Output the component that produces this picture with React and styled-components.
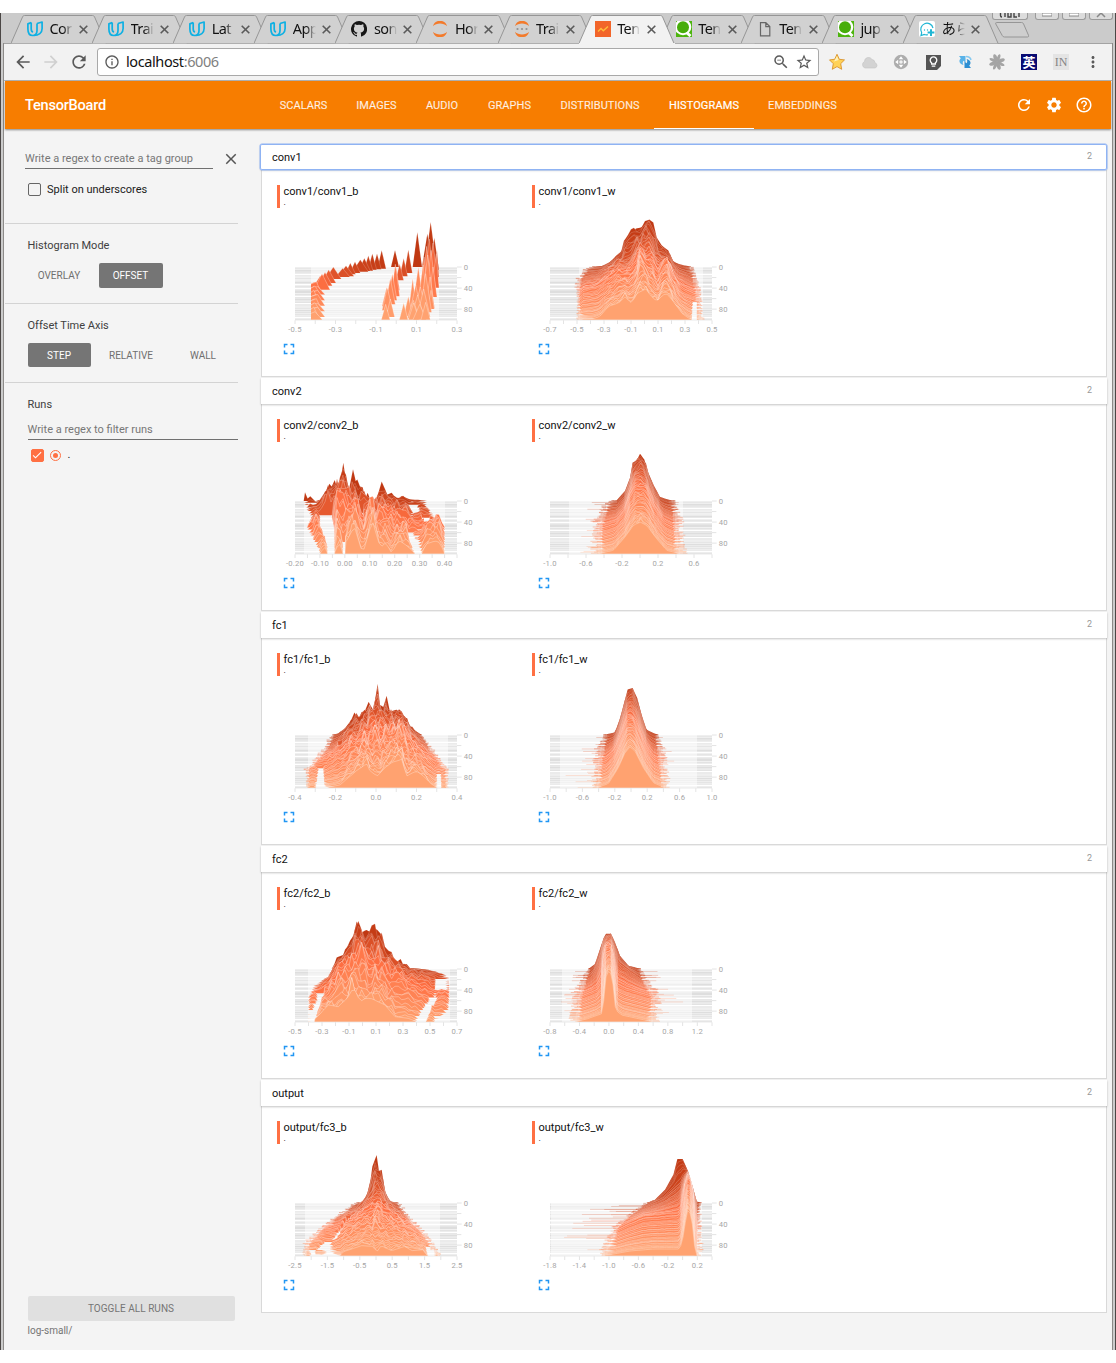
import React from "react";
import styled, { createGlobalStyle } from "styled-components";
import {
  MdArrowBack, MdArrowForward, MdRefresh, MdInfoOutline, MdZoomOut, MdStarBorder,
  MdMoreVert, MdSettings, MdHelpOutline, MdClose, MdFullscreen, MdCheck,
} from "react-icons/md";

const Global = createGlobalStyle`
  * { box-sizing: border-box; }
  body { margin: 0; background: #fff; font-family: Roboto, sans-serif; }
  svg { display: block; flex: none; }
`;

/* ---------- browser window ---------- */
const Screen = styled.div`
  width: 1116px;
  height: 1363px;
  padding-top: 13px;
  overflow: hidden;
`;
const BrowserWindow = styled.div`
  height: 1337px;
  border: solid #4b4745;
  border-width: 0 1px;
  background: #cbcbcb;
  display: flex;
  flex-direction: column;
  position: relative;
  overflow: hidden;
`;
const TabStrip = styled.div`
  height: 30px;
  flex: none;
  display: flex;
  padding: 2px 0 0 10px;
`;
const TabItem = styled.div`
  position: relative;
  z-index: ${(p) => (p.$active ? 2 : 1)};
  width: 81.1px;
  height: 28px;
  flex: none;
  display: flex;
  align-items: center;
  padding-left: 16px;
`;
const TabShape = styled.svg`
  position: absolute;
  left: 0;
  top: 0;
`;
const TabIcon = styled.span`
  position: relative;
  width: 16px;
  height: 16px;
`;
const TabTitle = styled.span`
  position: relative;
  width: 29px;
  margin: 0 .5px 2px 6.5px;
  white-space: nowrap;
  font: 14.5px/20px "Noto Sans", "Noto Sans CJK JP", sans-serif;
  letter-spacing: -0.6px;
  color: #111;
  -webkit-mask-image: linear-gradient(90deg, #000 13px, transparent 23px);
  mask-image: linear-gradient(90deg, #000 13px, transparent 23px);
`;
const TabClose = styled.svg`
  position: relative;
`;
const NewTab = styled.svg`
  margin: 6px 0 0 9px;
`;
const WindowButtons = styled.div`
  position: absolute;
  right: 2px;
  top: 0;
  height: 8px;
  display: flex;
  gap: 3px;
  overflow: hidden;
`;
const WindowButton = styled.div`
  width: ${(p) => p.$w}px;
  height: 7px;
  margin-right: ${(p) => p.$mr || 0}px;
  border: 1px solid #9b9b9b;
  border-top: 0;
  border-radius: 0 0 3px 3px;
  background: #dcdcdc;
  display: flex;
  justify-content: center;
`;
const Inner = styled.div`
  flex: 1;
  margin: 0 2px;
  border: solid #8c8a88;
  border-width: 0 1px;
  background: #f4f4f4;
  display: flex;
  flex-direction: column;
  min-height: 0;
`;
const Toolbar = styled.div`
  height: 38px;
  flex: none;
  display: flex;
  align-items: center;
  background: #f2f2f2;
  border-bottom: 1px solid #b4b4b4;
  border-top: 1px solid #a3a3a3;
  color: #5a5a5a;
`;
const NavButtons = styled.div`
  display: flex;
  width: 92px;
  padding-left: 9px;
  gap: 8px;
`;
const Omnibox = styled.div`
  width: 722px;
  height: 28px;
  margin-left: 1px;
  border: 1px solid #a9a9a9;
  border-radius: 3px;
  background: #fff;
  display: flex;
  align-items: center;
  padding: 0 5px 0 6px;
`;
const BookmarkStar = styled(MdStarBorder)`
  margin-left: 5px;
`;
const Address = styled.div`
  flex: 1;
  margin-left: 6px;
  padding-bottom: 2px;
  font: 14.5px/20px "Noto Sans", sans-serif;
  letter-spacing: -0.4px;
  color: #111;
  span { color: #808080; }
`;
const Extensions = styled.div`
  display: flex;
  padding-left: 2px;
  & > * {
    width: 32px;
    height: 18px;
    display: flex;
    align-items: center;
    justify-content: center;
  }
`;
const KanjiBadge = styled.span`
  width: 16px;
  height: 16px;
  background: #090b73;
  color: #fff;
  text-align: center;
  font: bold 13px/15px "Noto Sans CJK JP", sans-serif;
`;
const NotionBadge = styled.span`
  width: 16px;
  height: 16px;
  background: #e4e4e4;
  color: #858585;
  text-align: center;
  font: 12px/16px "Liberation Serif", serif;
`;

/* ---------- app ---------- */
const AppHeader = styled.header`
  height: 48px;
  flex: none;
  margin: 0 1px;
  background: #f77d00;
  box-shadow: 0 1px 2px rgba(0, 0, 0, 0.45);
  display: flex;
  align-items: center;
  position: relative;
  color: #fff;
`;
const Brand = styled.h1`
  margin: 0;
  width: 260px;
  padding-left: 20px;
  font: 500 14.6px/20px Roboto, sans-serif;
  letter-spacing: -0.25px;
`;
const NavTab = styled.a`
  width: ${(p) => p.$w}px;
  height: 48px;
  line-height: 49px;
  text-align: center;
  font-size: 11px;
  font-weight: 400;
  letter-spacing: ${(p) => (p.$active ? 0.12 : 0.05)}px;
  color: ${(p) => (p.$active ? "#fff" : "rgba(255,255,255,.82)")};
  -webkit-text-stroke: 0.2px currentColor;
  box-shadow: ${(p) => (p.$active ? "inset 0 -1px #fff" : "none")};
`;
const HeaderActions = styled.div`
  margin-left: auto;
  display: flex;
  gap: 12px;
  padding-right: 18px;
`;
const Body = styled.div`
  flex: 1;
  display: flex;
  min-height: 0;
`;
const Sidebar = styled.aside`
  width: 234px;
  flex: none;
  padding-left: 1px;
  display: flex;
  flex-direction: column;
  font-size: 11px;
  color: #404040;
`;
const Section = styled.section`
  height: ${(p) => p.$h}px;
  border-bottom: 1px solid #d3d3d3;
  padding: ${(p) => p.$pad || "14px 0 0 22.5px"};
`;
const SectionTitle = styled.h3`
  margin: 0;
  font: 400 11px/15px Roboto, sans-serif;
`;
const TagRow = styled.div`
  display: flex;
  gap: 9px;
  align-items: center;
  height: 20px;
  color: #555;
`;
const RegexField = styled.div`
  width: ${(p) => p.$w}px;
  flex: none;
  height: 20px;
  margin-top: ${(p) => p.$mt || 0}px;
  line-height: 19px;
  color: #777;
  border-bottom: 1px solid #707070;
`;
const CheckRow = styled.label`
  display: flex;
  align-items: center;
  height: 16px;
  line-height: 16px;
  margin: ${(p) => p.$mt}px 0 0 3px;
  color: #212121;
`;
const CheckLabel = styled.span`
  padding-top: 1px;
`;
const CheckBox = styled.span`
  width: 13px;
  height: 13px;
  margin-right: ${(p) => (p.$on ? 0 : 6)}px;
  border-radius: 2px;
  border: 1.5px solid ${(p) => (p.$on ? "#ff7043" : "#666")};
  background: ${(p) => (p.$on ? "#ff7043" : "transparent")};
  color: #fff;
  display: flex;
  align-items: center;
  justify-content: center;
`;
const RadioDot = styled.span`
  width: 11px;
  height: 11px;
  margin: 0 7px 0 6px;
  border: 1px solid #ff7043;
  border-radius: 50%;
  display: flex;
  align-items: center;
  justify-content: center;
  &::after {
    content: "";
    width: 5px;
    height: 5px;
    flex: none;
    border-radius: 50%;
    background: #ff7043;
  }
`;
const ButtonRow = styled.div`
  display: flex;
  gap: 8px;
  margin-top: 10px;
`;
const ModeButton = styled.button`
  width: ${(p) => p.$w}px;
  height: ${(p) => p.$h || 25}px;
  padding: 0;
  border: 0;
  border-radius: 2px;
  font: 400 10px/25px Roboto, sans-serif;
  background: ${(p) => (p.$active ? "#757575" : "transparent")};
  color: ${(p) => (p.$active ? "#fff" : "#6f6f6f")};
`;
const Runs = styled.section`
  flex: 1;
  padding: 14px 0 0 22.5px;
  display: flex;
  flex-direction: column;
`;
const RunsFooter = styled.div`
  margin-top: auto;
  padding-bottom: 12px;
  color: #757575;
  font-size: 10px;
  line-height: 15px;
`;
const ToggleButton = styled.button`
  display: block;
  width: 207px;
  height: 25px;
  margin-bottom: 2px;
  padding: 0 0 1px;
  border: 0;
  border-radius: 2px;
  background: #e0e0e0;
  color: #757575;
  font: 400 10px/23px Roboto, sans-serif;
  letter-spacing: 0.05px;
`;
const Main = styled.main`
  padding: 15px 0 0 22px;
  width: 870px;
`;
const Category = styled.section`
  width: 847px;
  height: 234px;
`;
const CategoryHeader = styled.div`
  height: 26px;
  margin-left: ${(p) => (p.$focus ? 0 : 1)}px;
  padding: 0 15px 0 ${(p) => (p.$focus ? 12 : 11)}px;
  position: relative;
  display: flex;
  align-items: center;
  justify-content: space-between;
  background: #fff;
  font-size: 11px;
  line-height: 15px;
  color: #111;
  border-radius: ${(p) => (p.$focus ? 2 : 0)}px;
  box-shadow: ${(p) => (p.$focus ? "inset 0 0 0 1px #8fb3f3, 0 0 0 .5px #8fb3f3, 0 1px 2px rgba(0,0,0,.15)" : "0 1px 2px rgba(0,0,0,.24)")};
  small { font-size: 9px; color: #999; padding-bottom: 1px; }
`;
const CategoryBody = styled.div`
  margin: 0 0 0 1px;
  height: 207px;
  border: 1px solid #d9d9d9;
  border-top: 0;
  background: #fff;
  padding: 15px 0 0 15px;
  display: flex;
`;
const Card = styled.article`
  width: 255px;
`;
const CardTitle = styled.div`
  height: 23px;
  border-left: 3px solid #ff7043;
  padding-left: 3.5px;
  font-size: 11px;
  line-height: 13px;
  color: #111;
  div { font-size: 9px; line-height: 9px; }
`;
const ChartSvg = styled.svg`
  margin: -1px 0 -4px 3px;
  text { font-family: Roboto, "Noto Sans", sans-serif; font-size: 23px; fill: #a6a6a6; letter-spacing: .5px; }
`;
const Expand = styled.div`
  color: #2196f3;
  padding-left: 3px;
`;

/* ---------- histogram data: [x, height] outlines at moments in time ---------- */
const N = 52;
const rng = (seed) => () => {
  seed = (seed * 1664525 + 1013904223) % 4294967296;
  return seed / 4294967296;
};
const at = (pts, x) => {
  if (x <= pts[0][0]) return 0;
  for (let i = 1; i < pts.length; i++)
    if (x <= pts[i][0]) {
      const [a, b] = [pts[i - 1], pts[i]];
      return a[1] + ((b[1] - a[1]) * (x - a[0])) / (b[0] - a[0] || 1);
    }
  return 0;
};
const mix = (a, b, f) => a.map((v, i) => Math.round(v + (b[i] - v) * f));
const shade = (t) => {
  const c = t < 0.45 ? mix([192, 56, 18], [255, 112, 67], t / 0.45) : mix([255, 112, 67], [255, 162, 112], (t - 0.45) / 0.55);
  return `rgb(${c})`;
};
const TIMES = (() => {
  const r = rng(11);
  const out = [0];
  for (let i = 1; i < N - 1; i++) out.push((i + (r() - 0.5) * 1.1) / (N - 1));
  return [...out, 1];
})();
const STRIPES = (() => {
  const r = rng(5);
  return Array.from({ length: 53 }, (_, y) => {
    if ([7, 17, 21, 29, 36, 50].includes(y)) return 0;
    const dense = [3, 15, 24, 25, 32, 43].includes(y);
    return dense ? 0.13 : 0.05 + r() * 0.06;
  });
})();

/* holes are empty bins: [from time, to time, left/right at start, left/right at end] */
function profileLayers({ keys, noise, step = 8, seed, every = 1, holes = [] }) {
  const r = rng(seed);
  const bins = Math.ceil(486 / step);
  let wob = Array.from({ length: bins + 1 }, () => r() - 0.5);
  const times = TIMES.filter((_, i) => i % every === 0 || i === N - 1);
  const keep = every > 1 ? 0.5 : 0.68;
  return times.map((t) => {
    let k = 0;
    while (k < keys.length - 2 && t > keys[k + 1][0]) k++;
    const [t0, a] = keys[k];
    const [t1, b] = keys[k + 1];
    const f = Math.min(1, (t - t0) / (t1 - t0));
    const left = a[0][0] * (1 - f) + b[0][0] * f;
    const right = a[a.length - 1][0] * (1 - f) + b[b.length - 1][0] * f;
    wob = wob.map((w) => w * keep + (r() - 0.5) * 0.65);
    const damp = t === 0 || t === 1 ? 0.05 : 1;
    const open = holes
      .filter((o) => t >= o[0] && t <= o[1])
      .map((o) => {
        const g = (t - o[0]) / (o[1] - o[0]);
        return [o[2] + (o[4] - o[2]) * g, o[3] + (o[5] - o[3]) * g];
      });
    const xs = new Set([Math.round(left), Math.round(right), ...open.flat()]);
    for (let i = 0; i <= bins; i++) xs.add(i * step);
    if (t === 0) a.forEach((p) => xs.add(p[0]));
    const pts = [...xs].sort((m, n) => m - n).map((x) => {
      if (x <= left || x >= right || open.some(([l, q]) => x >= l && x <= q)) return [x, 0];
      const h = at(a, x) * (1 - f) + at(b, x) * f;
      const taper = t === 0 ? 1 : Math.min(1, (x - left) / 14, (right - x) / 14);
      return [x, h < 1.2 ? 0 : Math.max(0, h * taper * (1 + wob[Math.round(x / step)] * noise * damp))];
    });
    return { t, pts };
  });
}

const spike = (x, base, peak, w) => ({ x, t: Math.max(0, base / 158), h: base - peak, w });
function spikeLayers() {
  const list = [
    [260, 5, -50, 13], [246, 7, -40, 13], [232, 8, -40, 13], [220, 11, -34, 14], [196, 14, -22, 24],
    [180, 18, -16, 16], [166, 22, -12, 16], [153, 28, -4, 24], [115, 36, 0, 24], [101, 48, 8, 22],
    [81, 68, 20, 24], [76, 60, 26, 22], [208, 12, -26, 18], [143, 30, 4, 22], [90, 56, 16, 22],
    [300, 0, -50, 12], [340, 18, -52, 12], [326, 28, -26, 12], [314, 40, -10, 12],
    [301, 88, -8, 13], [303, 70, 0, 11], [292, 100, 20, 14], [286, 112, 34, 15], [275, 118, 60, 14], [277, 130, 62, 16],
    [367, 0, -104, 14], [397, 0, -100, 16], [407, 2, -135, 18], [418, 8, -88, 15], [426, 30, -50, 10],
    [424, 62, -40, 14], [414, 60, -72, 17], [403, 52, -84, 16], [395, 80, -62, 17], [408, 88, -50, 16],
    [387, 90, -30, 14], [414, 90, 0, 12], [398, 110, -36, 18], [370, 118, 0, 17], [384, 120, -6, 16],
    [405, 124, 30, 14], [353, 128, 34, 12], [392, 136, 20, 18], [362, 136, 54, 18], [376, 140, 60, 20],
    [408, 126, 70, 10], [340, 148, 88, 14], [386, 150, 66, 20], [368, 152, 84, 20], [355, 154, 100, 18],
    [326, 158, 108, 13], [356, 158, 108, 16], [374, 158, 112, 20], [392, 158, 106, 14],
    [272, 158, 112, 13], [286, 150, 96, 13],
  ].map((s) => spike(...s));
  for (let i = 0; i < 22; i++) {
    const b = 70 + i * 4.2;
    list.push({ x: 56 + (i % 4) * 4, t: b / 158, h: 24 + (i % 3) * 5, w: 16 + (i % 2) * 6 });
  }
  return list
    .sort((a, b) => a.t - b.t)
    .map((s) => {
      const l = Math.max(48, s.x - s.w);
      return { t: s.t, pts: [[l, s.x < 72 ? s.h * 0.8 : 0], [s.x, s.h], [Math.min(432, s.x + s.w), 0]] };
    });
}

const CHARTS = {
  "conv1/conv1_b": {
    spikes: true, dom: [48, 433], ticks: ["-0.5", "-0.3", "-0.1", "0.1", "0.3"], gap: 121.5,
  },
  "conv1/conv1_w": {
    dom: [87, 458], ticks: ["-0.7", "-0.5", "-0.3", "-0.1", "0.1", "0.3", "0.5"], gap: 81, noise: 0.3, step: 9, seed: 3, edge: 8,
    holes: [[0.66, 1, 430, 440, 426, 440]],
    keys: [
      [0, [[110, 0], [155, 3], [180, 15], [200, 33], [212, 40], [222, 80], [235, 92], [258, 115], [275, 120], [285, 138], [298, 142], [310, 134], [320, 90], [335, 65], [355, 50], [370, 15], [400, 5], [430, 0]]],
      [0.25, [[87, 0], [95, 6], [140, 14], [180, 40], [212, 62], [235, 60], [262, 100], [278, 100], [300, 115], [320, 70], [350, 62], [375, 30], [410, 10], [440, 0]]],
      [0.55, [[86, 0], [88, 16], [130, 22], [170, 44], [205, 70], [230, 60], [258, 90], [272, 145], [285, 110], [305, 95], [325, 60], [346, 118], [360, 80], [390, 25], [430, 6], [452, 0]]],
      [1, [[86, 0], [92, 2], [130, 3], [150, 10], [175, 40], [205, 50], [225, 68], [245, 50], [262, 80], [288, 92], [300, 75], [320, 55], [340, 75], [350, 78], [370, 55], [395, 20], [415, 5], [428, 2], [442, 3], [456, 0]]],
    ],
  },
  "conv2/conv2_b": {
    dom: [28, 449], ticks: ["-0.20", "-0.10", "0.00", "0.10", "0.20", "0.30", "0.40"], gap: 74.8, noise: 1.3, step: 9, seed: 21, every: 2,
    holes: [
      [0.04, 0.1, 44, 80, 44, 72], [0.3, 0.55, 76, 110, 76, 118], [0.55, 0.85, 78, 118, 98, 118], [0.85, 1, 98, 118, 98, 118],
      [0.24, 0.42, 194, 204, 196, 204], [0.12, 0.24, 344, 366, 356, 378], [0.26, 0.36, 300, 318, 308, 324], [0.32, 0.5, 378, 402, 392, 410],
      [0.42, 0.5, 318, 332, 322, 338], [0.62, 1, 330, 352, 362, 380], [0.8, 1, 144, 150, 144, 150], [0.42, 0.52, 208, 218, 210, 218],
    ],
    keys: [
      [0, [[26, 0], [30, 26], [38, 8], [46, 14], [60, 0], [75, 4], [95, 35], [103, 52], [110, 44], [119, 62], [127, 40], [136, 60], [145, 112], [153, 60], [163, 40], [174, 98], [182, 60], [187, 64], [195, 44], [203, 42], [211, 8], [218, 25], [226, 4], [245, 5], [260, 60], [270, 36], [277, 20], [290, 25], [305, 5], [320, 15], [345, 5], [375, 3], [400, 0]]],
      [0.1, [[28, 0], [42, 14], [60, 6], [85, 25], [100, 46], [120, 60], [135, 70], [145, 80], [160, 55], [175, 75], [190, 50], [205, 36], [220, 12], [240, 16], [260, 44], [280, 30], [300, 22], [325, 14], [350, 5], [380, 10], [398, 0]]],
      [0.3, [[48, 0], [60, 20], [72, 12], [90, 45], [105, 60], [118, 60], [132, 84], [145, 70], [155, 65], [170, 60], [190, 50], [205, 40], [225, 45], [240, 45], [260, 40], [275, 40], [300, 34], [330, 24], [350, 6], [395, 16], [420, 0]]],
      [0.5, [[34, 0], [44, 22], [60, 35], [70, 22], [78, 0], [112, 0], [118, 55], [130, 84], [145, 60], [160, 70], [175, 50], [190, 50], [198, 25], [212, 25], [225, 74], [240, 50], [260, 40], [285, 45], [300, 35], [330, 30], [350, 18], [375, 10], [415, 30], [440, 26], [450, 0]]],
      [0.78, [[58, 0], [62, 24], [74, 32], [94, 6], [98, 0], [116, 0], [120, 50], [132, 70], [145, 30], [160, 50], [176, 80], [190, 60], [205, 20], [230, 100], [248, 50], [270, 44], [290, 30], [312, 44], [335, 32], [345, 0], [372, 0], [395, 34], [420, 44], [447, 38], [450, 0]]],
      [1, [[75, 0], [77, 15], [85, 30], [98, 0], [118, 0], [132, 35], [145, 2], [150, 30], [178, 80], [203, 0], [215, 40], [232, 100], [250, 35], [263, 20], [272, 35], [290, 2], [310, 40], [335, 25], [360, 0], [378, 0], [395, 30], [420, 38], [447, 30], [449, 0]]],
    ],
  },
  "conv2/conv2_w": {
    dom: [58, 400], ticks: ["-1.0", "-0.6", "-0.2", "0.2", "0.6"], gap: 108, noise: 0.1, step: 8, seed: 5, edge: 24, tails: [60, 400], core: [150, 385],
    keys: [
      [0, [[170, 0], [200, 2], [225, 30], [240, 70], [248, 115], [260, 122], [270, 142], [283, 125], [295, 85], [310, 50], [330, 12], [360, 3], [380, 0]]],
      [0.5, [[145, 0], [165, 6], [200, 18], [225, 50], [245, 108], [258, 128], [270, 122], [285, 122], [310, 68], [340, 20], [380, 0]]],
      [1, [[145, 0], [190, 10], [225, 50], [250, 85], [270, 95], [290, 85], [320, 45], [350, 10], [390, 0]]],
    ],
  },
  "fc1/fc1_b": {
    dom: [38, 458], ticks: ["-0.4", "-0.2", "0.0", "0.2", "0.4"], gap: 121.5, noise: 0.5, step: 8, seed: 31, edge: 6,
    holes: [[0.64, 1, 72, 84, 64, 88], [0.26, 0.36, 128, 138, 130, 138], [0.74, 1, 426, 436, 428, 438]],
    keys: [
      [0, [[110, 0], [130, 5], [150, 20], [165, 35], [178, 68], [190, 50], [205, 60], [221, 100], [235, 75], [247, 138], [255, 90], [265, 85], [275, 118], [285, 70], [305, 76], [320, 64], [332, 52], [350, 20], [380, 0]]],
      [0.25, [[92, 0], [110, 8], [140, 25], [160, 50], [180, 58], [205, 75], [225, 85], [247, 105], [265, 88], [285, 90], [305, 85], [320, 85], [335, 60], [360, 40], [385, 15], [405, 0]]],
      [0.6, [[50, 0], [62, 10], [100, 20], [150, 40], [180, 66], [215, 85], [247, 95], [285, 95], [320, 110], [350, 60], [390, 30], [420, 10], [448, 0]]],
      [0.66, [[38, 0], [42, 14], [62, 8], [76, 2], [100, 15], [150, 36], [180, 62], [215, 82], [247, 85], [285, 90], [320, 105], [350, 55], [390, 32], [415, 8], [430, 3], [445, 10], [455, 0]]],
      [1, [[38, 0], [40, 14], [58, 5], [64, 0], [92, 0], [135, 8], [160, 30], [190, 55], [215, 72], [225, 50], [247, 35], [270, 60], [290, 75], [320, 85], [335, 35], [365, 50], [385, 35], [410, 10], [426, 0], [438, 0], [444, 12], [457, 0]]],
    ],
  },
  "fc1/fc1_w": {
    dom: [29, 440], ticks: ["-1.0", "-0.6", "-0.2", "0.2", "0.6", "1.0"], gap: 97.2, noise: 0.07, step: 8, seed: 8, edge: 20, tails: [40, 430], core: [145, 335],
    keys: [
      [0, [[160, 0], [195, 8], [210, 50], [222, 95], [233, 137], [248, 141], [262, 110], [275, 60], [290, 15], [325, 0]]],
      [0.5, [[145, 0], [170, 8], [195, 36], [215, 85], [232, 132], [245, 137], [260, 110], [285, 50], [310, 12], [335, 0]]],
      [1, [[140, 0], [175, 12], [205, 60], [225, 105], [240, 122], [255, 110], [280, 60], [310, 15], [345, 0]]],
    ],
  },
  "fc2/fc2_b": {
    dom: [39, 464], ticks: ["-0.5", "-0.3", "-0.1", "0.1", "0.3", "0.5", "0.7"], gap: 81, noise: 0.8, step: 10, seed: 77, every: 2,
    holes: [
      [0.5, 0.62, 68, 86, 68, 84], [0.62, 0.82, 66, 78, 52, 68], [0.82, 1, 48, 66, 50, 58],
      [0.2, 0.4, 422, 450, 420, 452], [0.54, 0.7, 408, 426, 396, 416], [0.7, 1, 392, 414, 364, 392],
    ],
    keys: [
      [0, [[110, 0], [118, 15], [125, 35], [145, 42], [165, 85], [175, 100], [185, 140], [200, 108], [215, 118], [230, 110], [245, 120], [258, 105], [265, 70], [285, 50], [305, 20], [317, 30], [325, 12], [335, 15], [345, 3], [400, 0]]],
      [0.14, [[98, 0], [115, 22], [145, 50], [165, 80], [185, 115], [210, 105], [250, 105], [270, 65], [300, 45], [340, 22], [390, 12], [440, 9], [462, 0]]],
      [0.32, [[54, 0], [75, 8], [100, 20], [120, 45], [145, 70], [165, 95], [185, 125], [210, 100], [250, 95], [270, 70], [300, 50], [340, 32], [400, 24], [424, 10], [428, 0], [452, 0], [457, 20], [464, 0]]],
      [0.56, [[38, 0], [55, 14], [80, 16], [110, 45], [135, 75], [160, 95], [185, 135], [200, 120], [215, 80], [235, 105], [260, 85], [280, 60], [310, 60], [340, 40], [380, 26], [408, 12], [418, 0], [424, 0], [430, 12], [462, 20], [464, 0]]],
      [0.8, [[38, 0], [48, 16], [60, 0], [68, 8], [100, 42], [135, 66], [160, 85], [180, 105], [200, 80], [215, 70], [240, 85], [270, 60], [310, 40], [350, 26], [378, 8], [388, 0], [404, 0], [410, 14], [450, 12], [462, 0]]],
      [1, [[39, 0], [42, 14], [52, 0], [70, 18], [85, 35], [100, 50], [130, 45], [160, 75], [172, 95], [180, 95], [195, 60], [215, 72], [240, 65], [270, 50], [300, 15], [340, 10], [366, 0], [388, 0], [405, 14], [420, 0]]],
    ],
  },
  "fc2/fc2_w": {
    dom: [35, 425], ticks: ["-0.8", "-0.4", "0.0", "0.4", "0.8", "1.2"], gap: 88.4, noise: 0.07, step: 7, seed: 9, edge: 22, tails: [30, 415], core: [90, 300],
    keys: [
      [0, [[115, 0], [135, 15], [150, 60], [162, 95], [168, 106], [183, 106], [195, 80], [210, 40], [235, 10], [275, 0]]],
      [0.2, [[102, 0], [125, 12], [145, 45], [162, 112], [168, 125], [184, 125], [192, 95], [205, 55], [245, 24], [275, 3], [285, 0]]],
      [0.55, [[85, 0], [140, 22], [155, 45], [163, 140], [170, 150], [182, 150], [190, 110], [200, 40], [230, 26], [290, 8], [315, 0]]],
      [1, [[75, 0], [110, 8], [155, 24], [160, 50], [167, 130], [172, 150], [181, 150], [188, 120], [197, 35], [215, 20], [270, 8], [310, 0]]],
    ],
  },
  "output/fc3_b": {
    dom: [30, 435], ticks: ["-2.5", "-1.5", "-0.5", "0.5", "1.5", "2.5"], gap: 97.2, noise: 0.45, step: 8, seed: 13, edge: 9,
    holes: [[0.36, 0.5, 156, 164, 148, 158], [0.5, 0.72, 140, 150, 112, 126], [0.74, 0.9, 94, 112, 66, 90], [0.9, 1, 46, 58, 50, 60], [0.84, 1, 392, 402, 400, 412]],
    keys: [
      [0, [[180, 0], [205, 3], [222, 35], [232, 110], [245, 144], [252, 95], [260, 100], [270, 35], [285, 5], [310, 0]]],
      [0.15, [[152, 0], [185, 12], [215, 40], [232, 80], [245, 95], [260, 80], [275, 34], [305, 14], [325, 0]]],
      [0.35, [[105, 0], [140, 12], [190, 30], [225, 60], [245, 75], [262, 55], [300, 30], [335, 12], [348, 0]]],
      [0.62, [[60, 0], [95, 14], [118, 6], [150, 28], [200, 50], [225, 54], [245, 75], [265, 60], [300, 44], [345, 24], [390, 0]]],
      [0.82, [[33, 0], [55, 10], [78, 12], [98, 0], [110, 2], [150, 25], [200, 46], [245, 56], [300, 42], [350, 28], [385, 10], [415, 0]]],
      [1, [[30, 0], [36, 7], [50, 0], [135, 0], [145, 12], [200, 30], [235, 28], [245, 10], [258, 30], [290, 15], [330, 28], [350, 15], [385, 18], [395, 0], [415, 0], [422, 5], [432, 0]]],
    ],
  },
  "output/fc3_w": {
    dom: [3, 456], ticks: ["-1.8", "-1.4", "-1.0", "-0.6", "-0.2", "0.2"], gap: 88.4, noise: 0.05, step: 7, seed: 15, edge: 14, tails: [10, 452], core: [210, 436],
    keys: [
      [0, [[290, 0], [315, 10], [345, 40], [370, 85], [382, 132], [398, 132], [412, 100], [425, 60], [440, 5], [455, 0]]],
      [0.12, [[262, 0], [300, 16], [340, 36], [375, 66], [392, 82], [405, 110], [414, 115], [430, 60], [442, 5], [448, 0]]],
      [0.5, [[195, 0], [230, 18], [280, 40], [390, 50], [400, 100], [410, 158], [418, 158], [432, 90], [442, 0]]],
      [1, [[150, 0], [180, 3], [240, 14], [310, 20], [385, 20], [396, 35], [404, 90], [413, 135], [420, 128], [432, 70], [441, 0]]],
    ],
  },
};

function Histogram({ name }) {
  const c = CHARTS[name];
  const r = rng(name.length * 97 + (c.seed || 1));
  const layers = c.spikes ? spikeLayers() : profileLayers(c);
  const minor = Math.round(486 / (c.gap / 2));
  return (
    <ChartSvg width="210" height="137" viewBox="-45 -180 630 411">
      {STRIPES.map((o, i) => (
        <g key={i}>
          <rect x="0" y={i * 3} width="486" height="3" fillOpacity={o} shapeRendering="crispEdges" />
          <rect x={c.dom[0]} y={i * 3} width={c.dom[1] - c.dom[0]} height="3" fill="#fff" fillOpacity=".5" shapeRendering="crispEdges" />
        </g>
      ))}
      {layers.map(({ t, pts }, i) => {
        const y = t * 158;
        const live = pts.filter((p, k) => p[1] > 0 || pts[k - 1]?.[1] > 0 || pts[k + 1]?.[1] > 0);
        if (!live.length) return null;
        const d = live.map(([x, h], k) => `${k ? "L" : "M"}${x} ${(y - h).toFixed(1)}`).join("");
        const x0 = live[0][0];
        const x1 = live[live.length - 1][0];
        const grow = Math.min(1, t * 2.5);
        const whisk = c.edge ? [r() * c.edge * grow, r() * c.edge * grow] : null;
        const far = c.tails && r() < 0.4 && t > 0.03;
        const reach = r() * Math.min(1, 0.35 + t);
        const tl = far ? c.core[0] + (c.tails[0] - c.core[0]) * reach : 0;
        const tr = far ? c.core[1] + (c.tails[1] - c.core[1]) * reach * r() : 0;
        return (
          <g key={i} fill={shade(t)}>
            {whisk && (
              <>
                <rect x={x0 - whisk[0]} y={y - 2.5} width={whisk[0] + 8} height="2.5" opacity=".5" />
                <rect x={x1 - 8} y={y - 2.5} width={whisk[1] + 8} height="2.5" opacity=".5" />
              </>
            )}
            {far && <rect x={tl} y={y - 2} width={tr - tl} height="2" opacity=".35" />}
            <path d={`M${x0} ${y}L${d.slice(1)}L${x1} ${y}Z`} />
            <path d={d} fill="none" stroke="#fff" strokeOpacity={t === 0 ? 0.15 : 0.24 + 0.22 * Math.min(1, t * 2.2)} strokeWidth="2" />
          </g>
        );
      })}
      <g stroke="#d6d6d6" strokeWidth="2">
        <path d="M0 160H486" stroke="#ececec" />
        {Array.from({ length: minor + 1 }, (_, i) => (
          <path key={i} d={`M${Math.min(486, (i * c.gap) / 2)} 160v11`} />
        ))}
        {[0, 1, 2, 3, 4].map((i) => (
          <path key={i} d={`M486 ${i * 31.6}h${i % 2 ? 13 : 14}`} />
        ))}
      </g>
      {c.ticks.map((label, i) => (
        <text key={label} x={i * c.gap} y="194" textAnchor="middle">{label}</text>
      ))}
      {[0, 40, 80].map((v) => (
        <text key={v} x="506" y={v * 1.58 + 8}>{v}</text>
      ))}
    </ChartSvg>
  );
}

/* ---------- favicons ---------- */
const Udacity = () => (
  <svg width="16" height="16" viewBox="0 0 16 16" fill="none" stroke="#0eb0e3" strokeWidth="1.7" strokeLinejoin="round">
    <path d="M4.2 1.6.9 2.900V8c0 4.200 2 6.500 4.800 6.500 2.900 0 4.300-2 4.300-5V2.500" />
    <path d="M4.200 1.600V8c0 1.800.6 2.800 1.900 3" />
    <path d="M10 2.500 15.100 1v6.500c0 4.300-3.400 7-8.300 7" />
  </svg>
);
const GitHub = () => (
  <svg width="16" height="16" viewBox="0 0 16 16" fill="#161616">
    <path d="M8 0a8 8 0 0 0-2.500 15.600c.4.1.5-.2.5-.4v-1.400c-2.200.5-2.700-1-2.700-1-.4-1-.9-1.200-.9-1.200-.7-.5.1-.5.1-.5.8.1 1.200.8 1.200.8.7 1.300 1.900.9 2.300.7.1-.5.3-.9.5-1.100-1.800-.2-3.600-.9-3.600-4 0-.9.3-1.600.8-2.100-.1-.2-.4-1 .1-2.100 0 0 .7-.2 2.200.8a7.500 7.500 0 0 1 4 0c1.500-1 2.200-.8 2.200-.8.5 1.100.2 1.900.1 2.100.5.6.8 1.300.8 2.100 0 3.100-1.900 3.800-3.700 4 .3.3.6.8.6 1.500v2.200c0 .2.1.5.6.4A8 8 0 0 0 8 0z" />
  </svg>
);
const Jupyter = ({ busy }) => (
  <svg width="16" height="16" viewBox="0 0 16 16">
    <path d="M1 5.300a7.200 7.200 0 0 1 14 0c-3.400-3.600-10.600-3.600-14 0zM1 10.700a7.200 7.200 0 0 0 14 0c-3.400 3.600-10.600 3.600-14 0z" fill="#f37a2b" />
    {busy && <g fill="#929292"><circle cx="3.500" cy="8" r="1.100" /><circle cx="8" cy="8" r="1.100" /><circle cx="12.500" cy="8" r="1.100" /></g>}
  </svg>
);
const TensorIcon = () => (
  <svg width="16" height="16" viewBox="0 0 16 16">
    <path fill="#f2652a" d="M0 0h16v16H0z" />
    <path d="m3 10.500 3-3 2.300 2.300L13 5.500" fill="none" stroke="#ffbd3a" strokeWidth="1.400" />
  </svg>
);
const Qiita = () => (
  <svg width="16" height="16" viewBox="0 0 16 16">
    <path fill="#4db50e" d="M0 0h16v16H0z" />
    <circle cx="7" cy="6" r="8.300" fill="#fff" />
    <path d="m10 11 4.500 4" stroke="#fff" strokeWidth="3" />
    <circle cx="7" cy="6.200" r="6" fill="#47ad0b" />
  </svg>
);
const Doc = () => (
  <svg width="16" height="16" viewBox="0 0 16 16" fill="none" stroke="#666" strokeWidth="1.200">
    <path d="M3.500 1.600h5.300l4 4v9.200H3.500zM8.800 1.600v4h4" />
  </svg>
);
const Chat = () => (
  <svg width="16" height="16" viewBox="0 0 16 16">
    <rect width="16" height="16" rx="2" fill="#fff" />
    <path d="M8.800 13.600c-1 .3-2.300.3-3.500-.1L2 14.500l.7-2.800A6.200 6.200 0 1 1 14 7" fill="none" stroke="#20b6d4" strokeWidth="1.200" />
    <path d="M12 8.200v6.800M8.600 11.600h6.800" stroke="#20b6d4" strokeWidth="2" />
    <circle cx="5.500" cy="9" r=".7" fill="#20b6d4" /><circle cx="8.500" cy="9" r=".7" fill="#20b6d4" />
  </svg>
);

const TABS = [
  ["Cor", Udacity], ["Trai", Udacity], ["Lat", Udacity], ["App", Udacity], ["son", GitHub],
  ["Hor", Jupyter], ["Trai", () => <Jupyter busy />], ["Ten", TensorIcon, true], ["Ten", Qiita],
  ["Ten", Doc], ["jup", Qiita], ["あら", Chat],
];

function BrowserTab({ title, Icon, active }) {
  return (
    <TabItem $active={active}>
      <TabShape width="96" height="29" viewBox="0 0 96 29">
        <path d="M0 28.300 11.600 1.800Q12.100.5 13.500.5h68q1.400 0 2 1.300L95 28.300" fill={active ? "#f2f2f2" : "#d1d1d1"} stroke="#969696" />
        {active && <path d="M0 28.500h96" stroke="#f2f2f2" />}
      </TabShape>
      <TabIcon><Icon /></TabIcon>
      <TabTitle>{title}</TabTitle>
      <TabClose width="9" height="9" viewBox="0 0 9 9" stroke="#5a5a5a" strokeWidth="1.600">
        <path d="m.7.7 7.600 7.600M8.300.7.7 8.300" />
      </TabClose>
    </TabItem>
  );
}

const NAV = [
  ["SCALARS", 77], ["IMAGES", 69], ["AUDIO", 62], ["GRAPHS", 73], ["DISTRIBUTIONS", 108],
  ["HISTOGRAMS", 100], ["EMBEDDINGS", 97],
];
const CATEGORIES = [
  ["conv1", ["conv1/conv1_b", "conv1/conv1_w"]],
  ["conv2", ["conv2/conv2_b", "conv2/conv2_w"]],
  ["fc1", ["fc1/fc1_b", "fc1/fc1_w"]],
  ["fc2", ["fc2/fc2_b", "fc2/fc2_w"]],
  ["output", ["output/fc3_b", "output/fc3_w"]],
];

function ExtensionIcons() {
  return (
    <Extensions>
      <span>
        <svg width="18" height="18" viewBox="0 0 18 18">
          <path d="m9 1.300 2.300 5 5.200.6-3.800 3.800 1 5.600L9 13.600l-4.700 2.700 1-5.600L1.500 6.900l5.200-.6z" fill="#ffd257" stroke="#d9932c" strokeWidth=".9" />
          <path d="m9 3 1.600 4L6 8.500z" fill="#fff2bd" />
        </svg>
      </span>
      <span>
        <svg width="17" height="13" viewBox="0 0 17 13">
          <path d="M4 12a3.500 3.500 0 0 1-.5-6.500A4 4 0 0 1 11 3.500a3.500 3.500 0 0 1 3 3.300A2.700 2.700 0 0 1 14 12z" fill="#d3d3d3" stroke="#c2c2c2" strokeWidth=".6" />
        </svg>
      </span>
      <span>
        <svg width="16" height="16" viewBox="0 0 16 16">
          <circle cx="8" cy="8" r="7.200" fill="#adadad" />
          <path d="m8 2.200 2.200 3H5.800zM8 13.800l2.200-3H5.800zM2.200 8l3-2.200v4.400zM13.800 8l-3-2.200v4.400z" fill="#fff" />
          <circle cx="8" cy="8" r="1.800" fill="#f0f0f0" />
        </svg>
      </span>
      <span>
        <svg width="15" height="15" viewBox="0 0 15 15">
          <path d="M0 0h15v11l-4 4H0z" fill="#555" />
          <path d="M5.600 9V7.900a3.300 3.300 0 1 1 3.800 0V9zM5.700 11.200h3.600" fill="none" stroke="#fff" strokeWidth="1.300" />
        </svg>
      </span>
      <span>
        <svg width="14" height="14" viewBox="0 0 14 14">
          <path d="M1 1h6.500v6.500L5.500 5.800C4.500 7 4.500 8.500 5.500 10 1 9 .5 5.500 2.800 3.300z" fill="#58b2e8" />
          <path d="M13 13H6.500V6.500l2 1.700c1-1.200 1-2.700 0-4.200 4.500 1 5 4.500 2.700 6.700z" fill="#2c8ed2" />
          <path d="M8 1.500c3 0 4.500 1 5 3.500" fill="none" stroke="#85c9f0" strokeWidth="1.500" />
        </svg>
      </span>
      <span>
        <svg width="16" height="16" viewBox="0 0 16 16" fill="#a5a5a5">
          {[20, 70, 115, 160, 205, 250, 295, 340].map((a, i) => (
            <ellipse key={a} cx="8" cy="3.800" rx={i % 2 ? 1.9 : 1.5} ry="4" transform={`rotate(${a} 8 8)`} />
          ))}
        </svg>
      </span>
      <span><KanjiBadge>英</KanjiBadge></span>
      <span><NotionBadge>IN</NotionBadge></span>
      <span><MdMoreVert size={18} /></span>
    </Extensions>
  );
}

export default function App() {
  return (
    <Screen>
      <Global />
      <BrowserWindow>
        <TabStrip>
          {TABS.map(([title, Icon, active], i) => (
            <BrowserTab key={i} title={title} Icon={Icon} active={active} />
          ))}
          <NewTab width="38" height="18" viewBox="0 0 38 18">
            <path d="M3.500 1.500h25q1.500 0 2 1.300l5 11.500q.6 1.700-1 1.700h-23q-1.500 0-2.200-1.400L2.800 3q-.5-1.500.7-1.500z" fill="#cecece" stroke="#969696" />
          </NewTab>
        </TabStrip>
        <WindowButtons>
          <WindowButton $w={36} $mr={4}>
            <svg width="22" height="6" viewBox="0 0 22 6" fill="none" stroke="#444" strokeWidth="1.400">
              <path d="M1.500 0v2.500q0 1.500 1.500 1.500M6 0v4M9 0v4h3V0M15 0v4h3M20 0v4" />
            </svg>
          </WindowButton>
          <WindowButton $w={24}><svg width="10" height="5"><path d="M0 0h10v3H0z" fill="#fff" stroke="#888" /></svg></WindowButton>
          <WindowButton $w={24}><svg width="10" height="5"><path d="M0 0h10v3H0z" fill="#fff" stroke="#888" /></svg></WindowButton>
          <WindowButton $w={24}><svg width="10" height="5"><path d="M5 0 9 4M5 0 1 4" stroke="#888" strokeWidth="1.500" /></svg></WindowButton>
        </WindowButtons>
        <Inner>
          <Toolbar>
            <NavButtons>
              <MdArrowBack size={20} />
              <MdArrowForward size={20} color="#d0d0d0" />
              <MdRefresh size={20} />
            </NavButtons>
            <Omnibox>
              <MdInfoOutline size={16} />
              <Address>localhost<span>:6006</span></Address>
              <MdZoomOut size={18} />
              <BookmarkStar size={18} />
            </Omnibox>
            <ExtensionIcons />
          </Toolbar>
          <AppHeader>
            <Brand>TensorBoard</Brand>
            {NAV.map(([label, w]) => (
              <NavTab key={label} $w={w} $active={label === "HISTOGRAMS"}>{label}</NavTab>
            ))}
            <HeaderActions>
              <MdRefresh size={18} />
              <MdSettings size={18} />
              <MdHelpOutline size={18} />
            </HeaderActions>
          </AppHeader>
          <Body>
            <Sidebar>
              <Section $h={95} $pad="20px 0 0 20px">
                <TagRow>
                  <RegexField $w={188}>Write a regex to create a tag group</RegexField>
                  <MdClose size={18} />
                </TagRow>
                <CheckRow $mt={12}>
                  <CheckBox />
                  <CheckLabel>Split on underscores</CheckLabel>
                </CheckRow>
              </Section>
              <Section $h={80}>
                <SectionTitle>Histogram Mode</SectionTitle>
                <ButtonRow>
                  <ModeButton $w={63}>OVERLAY</ModeButton>
                  <ModeButton $w={64} $active>OFFSET</ModeButton>
                </ButtonRow>
              </Section>
              <Section $h={79}>
                <SectionTitle>Offset Time Axis</SectionTitle>
                <ButtonRow>
                  <ModeButton $w={63} $h={24} $active>STEP</ModeButton>
                  <ModeButton $w={65} $h={24}>RELATIVE</ModeButton>
                  <ModeButton $w={63} $h={24}>WALL</ModeButton>
                </ButtonRow>
              </Section>
              <Runs>
                <SectionTitle>Runs</SectionTitle>
                <RegexField $w={210} $mt={8}>Write a regex to filter runs</RegexField>
                <CheckRow $mt={7}>
                  <CheckBox $on><MdCheck size={12} /></CheckBox>
                  <RadioDot />.
                </CheckRow>
                <RunsFooter>
                  <ToggleButton>TOGGLE ALL RUNS</ToggleButton>
                  log-small/
                </RunsFooter>
              </Runs>
            </Sidebar>
            <Main>
              {CATEGORIES.map(([name, charts], i) => (
                <Category key={name}>
                  <CategoryHeader $focus={i === 0}>{name}<small>2</small></CategoryHeader>
                  <CategoryBody>
                    {charts.map((chart) => (
                      <Card key={chart}>
                        <CardTitle>{chart}<div>.</div></CardTitle>
                        <Histogram name={chart} />
                        <Expand><MdFullscreen size={18} /></Expand>
                      </Card>
                    ))}
                  </CategoryBody>
                </Category>
              ))}
            </Main>
          </Body>
        </Inner>
      </BrowserWindow>
    </Screen>
  );
}
